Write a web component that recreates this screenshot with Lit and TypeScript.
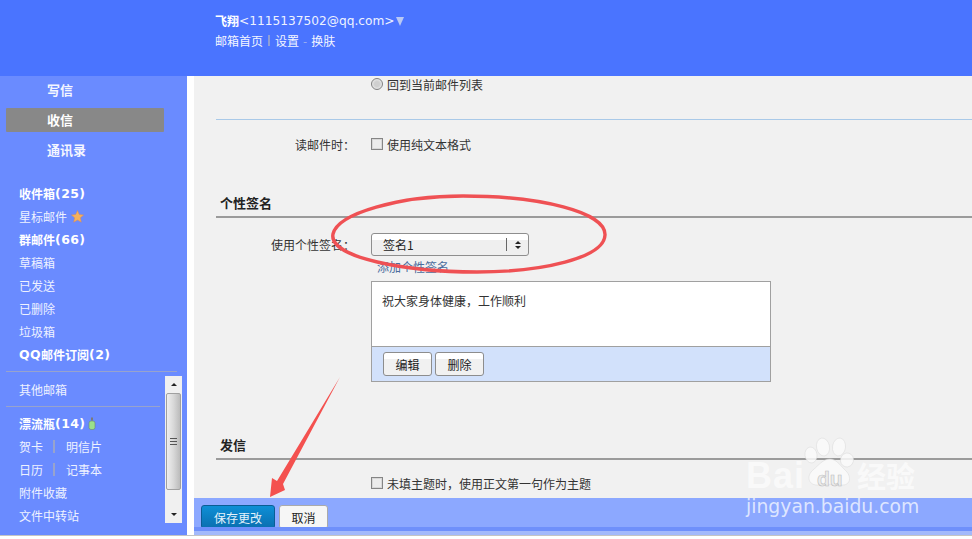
import { LitElement, html, css, svg } from "lit";
import { customElement } from "lit/decorators.js";

@customElement("app-root")
export class AppRoot extends LitElement {
  static styles = css`
    :host {
      display: block;
      position: relative;
      width: 972px;
      height: 539px;
      overflow: hidden;
      background: #fff;
      font-family: "Noto Sans CJK SC", "Liberation Sans", sans-serif;
      font-size: 12px;
      color: #333;
    }
    .header {
      height: 76px;
      box-sizing: border-box;
      background: #4a74ff;
      padding: 12px 0 0 215px;
      color: #fff;
    }
    .acct { display: flex; align-items: center; height: 18px; line-height: 18px; }
    .acct b { font-weight: 700; font-size: 12px; }
    .mail { font-family: "DejaVu Sans", sans-serif; font-size: 12.2px; color: #eef2ff; }
    .caret { width: 0; height: 0; border-left: 4.5px solid transparent; border-right: 4.5px solid transparent; border-top: 9px solid #b9c9f4; margin-left: 1px; }
    .links { display: flex; align-items: center; margin-top: 1px; height: 18px; font-size: 12px; color: #f4f6ff; }
    .links i { width: 2px; height: 11px; background: #8f9fd6; margin: 0 5px 0 5px; }
    .links em { font-style: normal; color: #9fb1f0; margin: 0 4px; }

    .body { display: flex; height: 459px; }
    .side {
      width: 187px;
      flex: none;
      background: #6a8bff;
      color: #fff;
      box-sizing: border-box;
      padding-top: 2px;
      overflow: hidden;
    }
    .nav { height: 24px; margin: 6px 23px 0 6px; padding-left: 41px; line-height: 24px; font-weight: 700; font-size: 13px; border-radius: 1px; color: #f4f6ff; }
    .nav:first-child { margin-top: 0; }
    .nav.on { background: #888; color: #fff; }
    .folders { margin-top: 20px; padding-left: 19px; }
    .f { height: 23px; line-height: 23px; display: flex; align-items: center; font-size: 12px; color: #eef2ff; white-space: nowrap; }
    .f.b { font-weight: 700; color: #fff; }
    .f .n { font-family: "DejaVu Sans", sans-serif; font-weight: 700; font-size: 12.5px; letter-spacing: 0.4px; }
    .f i { width: 2px; height: 13px; background: #98a3cc; margin: 0 11px 0 10px; }
    .div1 { height: 1px; background: #98a3cc; margin: 5px 10px 0 6px; }
    .lower { display: flex; height: 163px; }
    .lcol { width: 165px; flex: none; }
    .lcol .f { margin-left: 19px; }
    .div2 { height: 1px; background: #98a3cc; margin: 5px 5px 5px 6px; }
    .lcol .first { margin-top: 6px; }
    .sb {
      width: 17px;
      height: 147px;
      margin-top: 4px;
      background: #f0f0f0;
      display: flex;
      flex-direction: column;
      align-items: center;
      box-sizing: border-box;
    }
    .sb .arr { height: 17px; width: 100%; display: flex; align-items: center; justify-content: center; }
    .up { width: 0; height: 0; border-left: 3.5px solid transparent; border-right: 3.5px solid transparent; border-bottom: 3.5px solid #222; }
    .dn { width: 0; height: 0; border-left: 3.5px solid transparent; border-right: 3.5px solid transparent; border-top: 3.5px solid #222; }
    .thumb {
      width: 15px;
      height: 97px;
      box-sizing: border-box;
      border: 1px solid #a0a0a0;
      border-radius: 2px;
      background: linear-gradient(to right, #eee, #d8d8d8 50%, #bbb);
      display: flex;
      align-items: center;
      justify-content: center;
    }
    .grip { width: 7px; height: 7px; background: repeating-linear-gradient(to bottom, #555 0 1px, transparent 1px 3px); }
    .sp { height: 12px; flex: 1; }

    .gap { width: 7px; flex: none; background: #fff; }
    .main { flex: 1; min-width: 0; display: flex; flex-direction: column; }
    .content { flex: 1; background: #f1f1f1; padding: 0 0 0 22px; min-height: 0; color: #333; overflow: hidden; }
    .row { display: flex; align-items: center; height: 20px; }
    .lab { width: 139px; text-align: right; flex: none; }
    .ctl { margin-left: 16px; display: flex; align-items: center; }
    .r1 { margin-top: -2px; }
    .radio { width: 10px; height: 10px; border-radius: 50%; border: 1px solid #808080; background: radial-gradient(circle, #cfcfcf 0 35%, #e9e9e9 75%); margin-right: 4px; }
    .check { width: 10px; height: 10px; border: 1px solid #858585; box-shadow: inset 0 0 0 1px #d8d8d8; background: #ececec; margin-right: 4px; }
    .hr { height: 1px; background: #a9c9e8; margin-top: 25px; }
    .title { font-size: 13px; font-weight: 700; color: #222; margin-left: 4px; line-height: 18px; }
    .line { height: 2px; background: #9b9b9b; }
    .select {
      width: 158px; height: 23px; box-sizing: border-box;
      border: 1px solid #8e8e8e; border-radius: 3px;
      background: linear-gradient(to bottom, #fff 0 6px, #efefef 6px);
      display: flex; align-items: center;
      font-size: 12px; color: #222;
    }
    .select .v { flex: 1; padding-left: 11px; }
    .select .s { width: 1px; height: 13px; background: #666; }
    .select .a { width: 21px; display: flex; flex-direction: column; align-items: center; gap: 2px; }
    .add { margin: 2px 0 0 161px; height: 18px; line-height: 18px; color: #4a6c9c; }
    .box { margin: 5px 0 0 155px; width: 400px; height: 101px; box-sizing: border-box; border: 1px solid #a0a0a0; background: #fff; display: flex; flex-direction: column; }
    .sig { flex: 1; padding: 10px 10px 0; line-height: 18px; color: #333; }
    .tools { height: 35px; box-sizing: border-box; border-top: 1px solid #a0a0a0; background: #d2e1fb; display: flex; gap: 3px; padding: 5px 0 0 11px; }
    .btn { width: 49px; height: 24px; box-sizing: border-box; border: 1px solid #8d8d8d; border-radius: 3px; background: linear-gradient(to bottom, #fff 0 6px, #f1f1f1 6px); display: flex; align-items: center; justify-content: center; color: #222; font-size: 12px; }
    .footer { height: 29px; flex: none; background: #8ca8ff; display: flex; gap: 4px; padding: 7px 0 0 7px; box-sizing: border-box; overflow: visible; }
    .strip { height: 4px; flex: none; background: #6f90fb; }
    .save { width: 74px; height: 24px; flex: none; box-sizing: border-box; border: 1px solid #0b5d95; border-radius: 3px; background: linear-gradient(to bottom, #0e8fd6, #0a6fb0); color: #e4f2fb; display: flex; align-items: center; justify-content: center; font-size: 12px; }
    .cancel { width: 49px; height: 24px; flex: none; box-sizing: border-box; border: 1px solid #aaa; border-radius: 3px; background: #f6f6f6; color: #222; display: flex; align-items: center; justify-content: center; font-size: 12px; }
    .bline { height: 4px; flex: none; background: #a3b9fb; }
    .edge { height: 1px; background: #c4c4c4; }
    .over { position: absolute; left: 0; top: 0; pointer-events: none; }
    .wm { position: absolute; left: 746px; top: 433px; width: 180px; height: 90px; pointer-events: none; }
    .wm .bai { position: absolute; left: 0; top: 23px; font: 700 36px/40px "Liberation Sans", sans-serif; letter-spacing: 1px; color: rgba(255,255,255,0.62); }
    .wm .du { position: absolute; left: 71px; top: 34px; font: 700 21px/24px "Liberation Sans", sans-serif; color: rgba(236,236,236,0.95); -webkit-text-stroke: 0.6px #bdbdbd; }
    .wm .jy { position: absolute; left: 111px; top: 25px; font-size: 29px; line-height: 34px; font-weight: 700; color: rgba(255,255,255,0.62); white-space: nowrap; }
    .wm .url { position: absolute; left: 0; top: 62px; font: 18.8px/24px "DejaVu Sans", sans-serif; color: rgba(255,255,255,0.72); white-space: nowrap; }
  `;

  render() {
    return html`
      <div class="header">
        <div class="acct"><b>飞翔</b><span class="mail">&lt;1115137502@qq.com&gt;</span><span class="caret"></span></div>
        <div class="links"><span>邮箱首页</span><i></i><span>设置</span><em>-</em><span>换肤</span></div>
      </div>
      <div class="body">
        <aside class="side">
          <div class="nav">写信</div>
          <div class="nav on">收信</div>
          <div class="nav">通讯录</div>
          <div class="folders">
            <div class="f b">收件箱<span class="n">(25)</span></div>
            <div class="f">星标邮件&nbsp;${this.star()}</div>
            <div class="f b">群邮件<span class="n">(66)</span></div>
            <div class="f">草稿箱</div>
            <div class="f">已发送</div>
            <div class="f">已删除</div>
            <div class="f">垃圾箱</div>
            <div class="f b"><span class="n">QQ</span>邮件订阅<span class="n">(2)</span></div>
          </div>
          <div class="div1"></div>
          <div class="lower">
            <div class="lcol">
              <div class="f first">其他邮箱</div>
              <div class="div2"></div>
              <div class="f b">漂流瓶<span class="n">(14)</span>&nbsp;${this.bottle()}</div>
              <div class="f">贺卡<i></i>明信片</div>
              <div class="f">日历<i></i>记事本</div>
              <div class="f">附件收藏</div>
              <div class="f">文件中转站</div>
            </div>
            <div class="sb">
              <div class="arr"><span class="up"></span></div>
              <div class="thumb"><span class="grip"></span></div>
              <div class="sp"></div>
              <div class="arr"><span class="dn"></span></div>
            </div>
          </div>
        </aside>
        <div class="gap"></div>
        <div class="main">
          <div class="content">
            <div class="row r1"><span class="lab"></span><span class="ctl"><span class="radio"></span>回到当前邮件列表</span></div>
            <div class="hr"></div>
            <div class="row" style="margin-top:14px"><span class="lab">读邮件时：</span><span class="ctl"><span class="check"></span>使用纯文本格式</span></div>
            <div class="title" style="margin-top:40px">个性签名</div>
            <div class="line" style="margin-top:4px"></div>
            <div class="row" style="margin-top:15px;height:23px"><span class="lab">使用个性签名：</span>
              <span class="ctl"><span class="select"><span class="v">签名1</span><span class="s"></span><span class="a"><span class="up"></span><span class="dn"></span></span></span></span>
            </div>
            <div class="add">添加个性签名</div>
            <div class="box">
              <div class="sig">祝大家身体健康，工作顺利</div>
              <div class="tools"><span class="btn">编辑</span><span class="btn">删除</span></div>
            </div>
            <div class="title" style="margin-top:54px">发信</div>
            <div class="line" style="margin-top:4px"></div>
            <div class="row" style="margin-top:13px"><span class="lab"></span><span class="ctl"><span class="check"></span>未填主题时，使用正文第一句作为主题</span></div>
          </div>
          <div class="footer"><span class="save">保存更改</span><span class="cancel">取消</span></div>
          <div class="strip"></div>
          <div class="bline"></div>
        </div>
      </div>
      <div class="edge"></div>
      <div class="wm">
        ${this.paw()}
        <span class="bai">Bai</span>
        <span class="du">du</span>
        <span class="jy">经验</span>
        <span class="url">jingyan.baidu.com</span>
      </div>
      <svg class="over" width="972" height="539" viewBox="0 0 972 539">
        <path d="M333 234 C 338 213, 400 196, 463 196 C 540 196, 606 212, 605 235 C 604 258, 542 272, 477 272 C 408 272, 328 258, 333 234 Z" fill="none" stroke="#ef5154" stroke-width="3.4" />
        <polygon points="340,377 283,484 285,490 270,497 272,478 277,481" fill="#f4514f" />
      </svg>
    `;
  }

  star() {
    return svg`<svg width="13" height="13" viewBox="0 0 13 13" style="margin-left:1px"><polygon points="6.5,0.5 8.3,4.5 12.6,5 9.4,7.8 10.3,12.2 6.5,10 2.7,12.2 3.6,7.8 0.4,5 4.7,4.5" fill="#f6b25c" stroke="#d9895a" stroke-width="0.5"/></svg>`;
  }
  bottle() {
    return svg`<svg width="8" height="13" viewBox="0 0 8 13"><rect x="3" y="0.5" width="2" height="3" fill="#7a7a7a"/><rect x="1" y="4" width="6" height="8.5" rx="2" fill="#9be08a" stroke="#6b8a70" stroke-width="0.6"/></svg>`;
  }
  paw() {
    return svg`<svg width="112" height="60" viewBox="0 0 112 60" style="position:absolute;left:0;top:0">
      <g fill="rgba(250,250,250,0.85)" stroke="rgba(215,215,215,0.8)" stroke-width="0.6">
        <ellipse cx="65" cy="22" rx="6" ry="8" transform="rotate(-8 65 22)"/>
        <ellipse cx="77" cy="14" rx="6.5" ry="9" transform="rotate(-10 77 14)"/>
        <ellipse cx="93" cy="14" rx="6.5" ry="9" transform="rotate(8 93 14)"/>
        <ellipse cx="101" cy="27" rx="6.5" ry="7" transform="rotate(15 101 27)"/>
        <path d="M84 26 C 90 26, 94 32, 99 37 C 106 43, 105 53, 95 52 C 88 51, 80 51, 73 52 C 62 53, 60 43, 67 37 C 73 32, 77 26, 84 26 Z"/>
      </g>
    </svg>`;
  }
}
